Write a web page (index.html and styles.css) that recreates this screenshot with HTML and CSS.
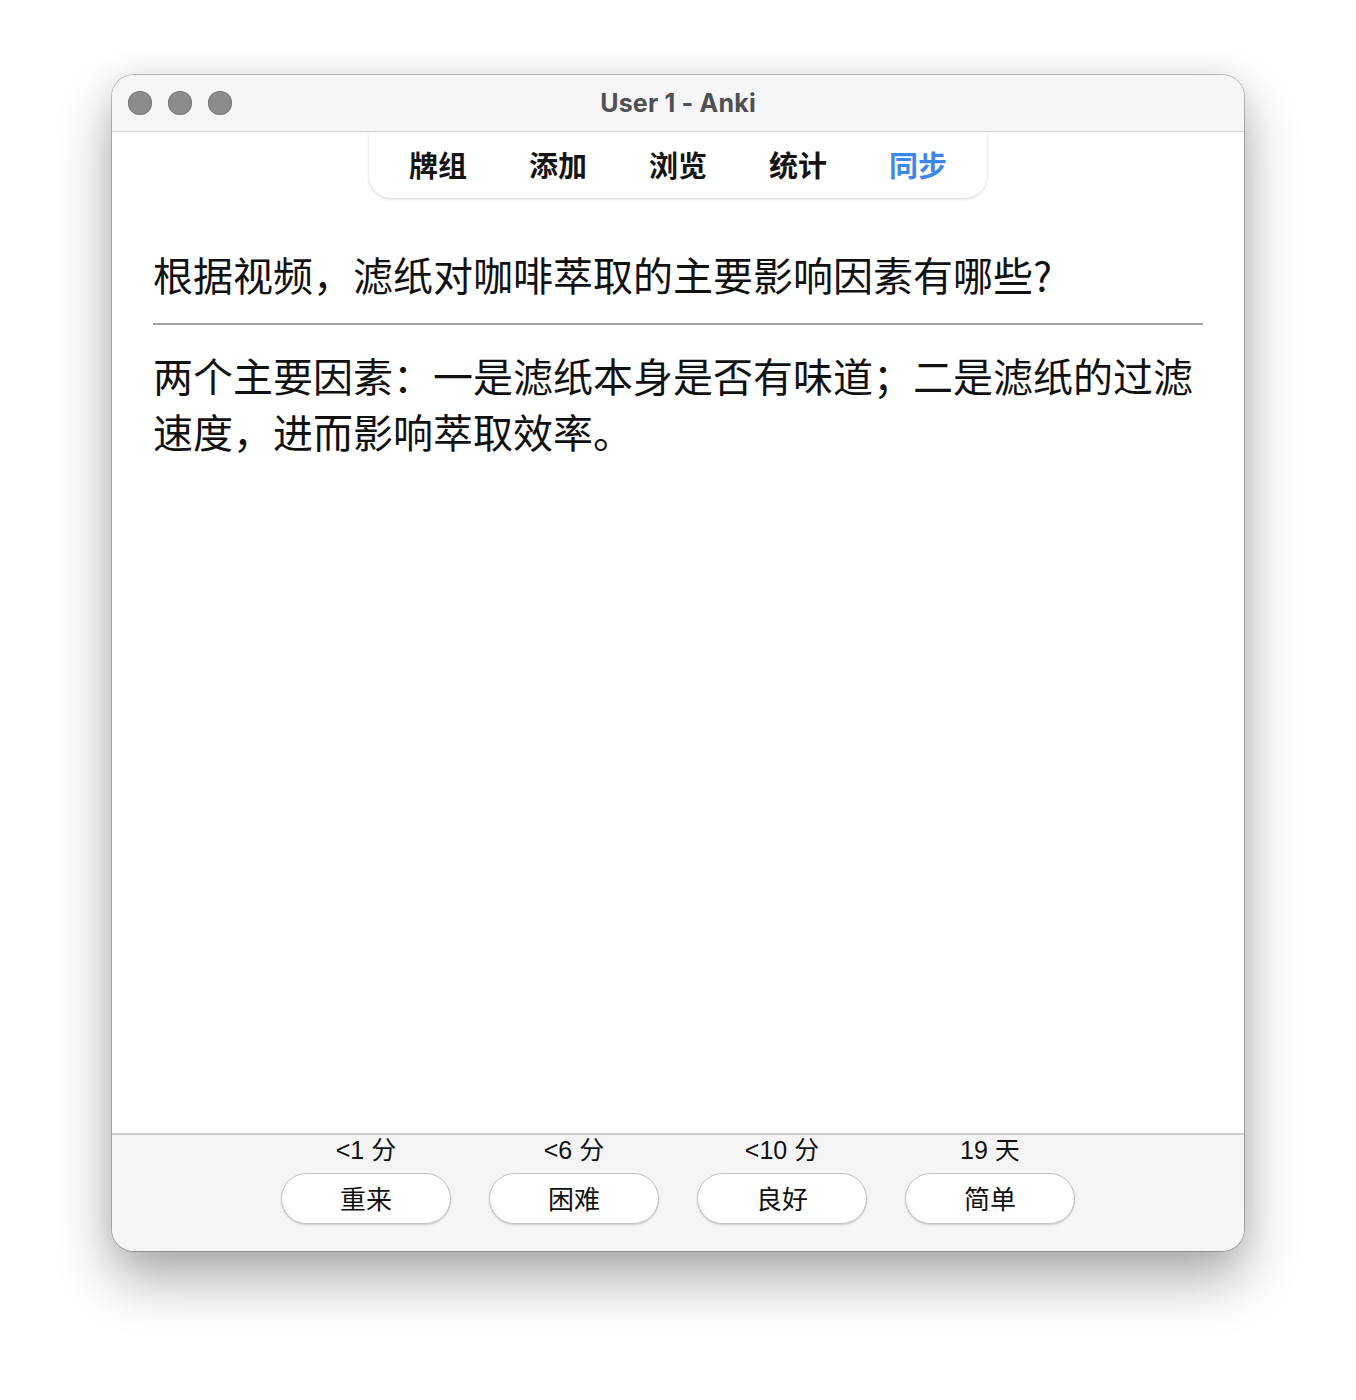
FILE: index.html
```html
<!DOCTYPE html>
<html lang="zh-CN">
<head>
<meta charset="utf-8">
<title>User 1 - Anki</title>
<link rel="stylesheet" href="styles.css">
</head>
<body>
<div class="window">
  <div class="titlebar">
    <div class="lights">
      <span class="light"></span>
      <span class="light"></span>
      <span class="light"></span>
    </div>
    <div class="title">User 1 - Anki</div>
  </div>
  <div class="main">
    <nav class="tabs">
      <span class="tab">牌组</span>
      <span class="tab">添加</span>
      <span class="tab">浏览</span>
      <span class="tab">统计</span>
      <span class="tab tab-active">同步</span>
    </nav>
    <div class="card">
      <div class="question">根据视频，滤纸对咖啡萃取的主要影响因素有哪些?</div>
      <hr class="divider">
      <div class="answer">两个主要因素：一是滤纸本身是否有味道；二是滤纸的过滤速度，进而影响萃取效率。</div>
    </div>
  </div>
  <div class="bottombar">
    <div class="ease">
      <div class="ease-time">&lt;1 分</div>
      <button class="ease-btn">重来</button>
    </div>
    <div class="ease">
      <div class="ease-time">&lt;6 分</div>
      <button class="ease-btn">困难</button>
    </div>
    <div class="ease">
      <div class="ease-time">&lt;10 分</div>
      <button class="ease-btn">良好</button>
    </div>
    <div class="ease">
      <div class="ease-time">19 天</div>
      <button class="ease-btn">简单</button>
    </div>
  </div>
</div>
</body>
</html>
```
FILE: styles.css
```css
html, body {
  margin: 0;
  padding: 0;
  background: #ffffff;
}
body {
  font-family: "Liberation Sans", "Noto Sans CJK SC", sans-serif;
  padding: 75px 0 0 112px;
  height: 1400px;
  box-sizing: border-box;
}
.window {
  width: 1132px;
  height: 1176px;
  border-radius: 22px;
  background: #ffffff;
  box-shadow: 0 0 0 1px rgba(0,0,0,0.22), 0 28px 55px rgba(0,0,0,0.33), 0 0 30px rgba(0,0,0,0.08);
  display: flex;
  flex-direction: column;
  overflow: hidden;
}
.titlebar {
  height: 57px;
  flex: none;
  background: #f6f6f8;
  border-bottom: 1px solid #d6d6d8;
  box-sizing: border-box;
  display: flex;
  align-items: center;
  position: relative;
}
.lights {
  display: flex;
  gap: 16px;
  padding-left: 16px;
}
.light {
  width: 24px;
  height: 24px;
  border-radius: 50%;
  background: #8c8c8c;
  box-shadow: inset 0 0 0 1px #7e7e7e;
}
.title {
  position: absolute;
  left: 0;
  right: 0;
  text-align: center;
  font-family: "Inter", "Liberation Sans", sans-serif;
  font-weight: 700;
  font-size: 25px;
  letter-spacing: 0.2px;
  color: #505052;
  pointer-events: none;
}
.main {
  flex: 1;
  display: flex;
  flex-direction: column;
  background: #ffffff;
}
.tabs {
  align-self: center;
  display: flex;
  height: 66px;
  align-items: center;
  padding: 0 9px;
  background: #ffffff;
  border-radius: 0 0 22px 22px;
  box-shadow: 0 1px 3px rgba(0,0,0,0.18);
}
.tab {
  width: 120px;
  text-align: center;
  font-family: "Noto Sans CJK SC", sans-serif;
  font-weight: 700;
  font-size: 29px;
  line-height: 40px;
  color: #141414;
  margin-top: -2px;
}
.tab-active {
  color: #3d87ea;
}
.card {
  padding: 48px 41px 0 41px;
  font-family: "Noto Sans CJK SC", sans-serif;
  font-size: 40px;
  line-height: 56px;
  color: #111111;
}
.divider {
  border: none;
  height: 2px;
  background: #a2a2a2;
  margin: 21px 0 22px 0;
}
.bottombar {
  height: 118px;
  flex: none;
  background: #f5f5f5;
  border-top: 2px solid #cfcfcf;
  box-sizing: border-box;
  display: flex;
  justify-content: center;
  gap: 38px;
  padding-top: 1px;
}
.ease {
  width: 170px;
  display: flex;
  flex-direction: column;
  align-items: center;
}
.ease-time {
  font-family: "Liberation Sans", "Noto Sans CJK SC", sans-serif;
  font-size: 25px;
  line-height: 28px;
  color: #111111;
}
.ease-btn {
  margin-top: 9px;
  width: 170px;
  height: 51px;
  border-radius: 26px;
  background: #ffffff;
  border: 1px solid #c4c4c4;
  box-shadow: 0 1px 2px rgba(0,0,0,0.18);
  font-family: "Noto Sans CJK SC", sans-serif;
  font-size: 26px;
  color: #111111;
  padding: 0 0 2px 0;
}
```
